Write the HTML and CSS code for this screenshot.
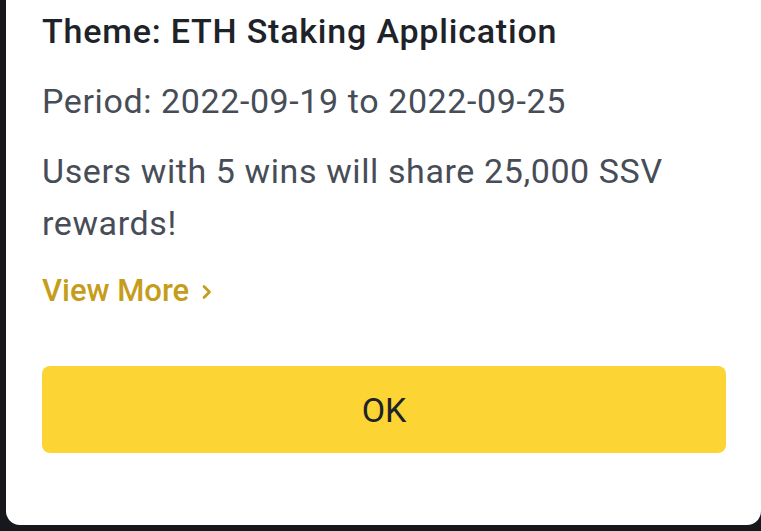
FILE: index.html
```html
<!doctype html>
<html lang="en">
<head>
    <meta charset="UTF-8">
    <title>Activity Notice</title>
    <link rel="stylesheet" href="styles.css">
</head>
<body>
    <div class="dialog">
        <h2 class="title">Theme: ETH Staking Application</h2>
        <p class="text period">Period: 2022-09-19 to 2022-09-25</p>
        <p class="text desc">Users with 5 wins will share 25,000 SSV rewards!</p>
        <a class="more" href="#">View More
            <svg class="arrow" viewBox="0 0 12 16" width="12" height="16">
                <path d="M3 2.5 L8.5 8 L3 13.5" fill="none" stroke="currentColor" stroke-width="2.8" stroke-linecap="round" stroke-linejoin="round"/>
            </svg>
        </a>
        <button class="ok" type="button">OK</button>
    </div>
</body>
</html>
```

FILE: styles.css
```css
*{
    margin: 0;
    padding: 0;
    box-sizing: border-box;
}
html,body{
    width: 100%;
    height: 100%;
    overflow: hidden;
}
body{
    background: #17181c;
    font-family: Roboto, "Noto Sans", sans-serif;
}
.dialog{
    display: flex;
    flex-direction: column;
    align-items: flex-start;
    margin-left: 6px;
    height: 525px;
    padding: 11px 35px 0 36px;
    background: #fff;
    border-radius: 0 0 14px 14px;
}
.title{
    font-size: 34px;
    line-height: 40px;
    font-weight: 500;
    letter-spacing: 0.8px;
    color: #1e2329;
}
.text{
    font-size: 34px;
    line-height: 52px;
    font-weight: 400;
    letter-spacing: 0.6px;
    color: #474d57;
}
.period{
    margin-top: 24px;
}
.desc{
    margin-top: 18px;
}
.more{
    display: flex;
    align-items: center;
    gap: 12px;
    margin-top: 22px;
    font-size: 31px;
    line-height: 40px;
    font-weight: 500;
    color: #c59d1a;
    text-decoration: none;
}
.more .arrow{
    margin-top: 2px;
}
.ok{
    width: 100%;
    height: 87px;
    margin-top: 55px;
    border: none;
    border-radius: 8px;
    background: #fcd535;
    font-family: inherit;
    font-size: 34px;
    font-weight: 400;
    color: #1e2329;
}
```
